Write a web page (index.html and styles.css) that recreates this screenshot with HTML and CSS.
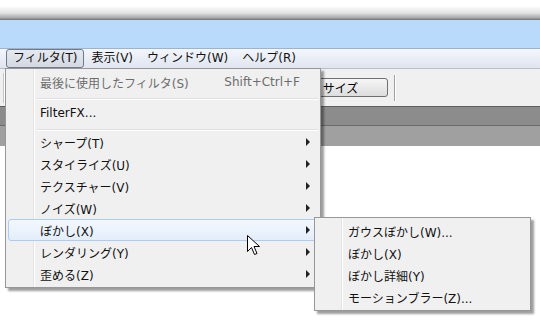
FILE: index.html
```html
<!DOCTYPE html>
<html lang="ja">
<head>
    <title>フィルタメニュー</title>
    <meta charset="utf-8">
    <meta name="viewport" content="width=device-width, initial-scale=1">
    <link rel="stylesheet" href="styles.css">
</head>
<body>
    <div class="window">
        <div class="top-edge"></div>
        <div class="titlebar"></div>

        <div class="menubar">
            <span class="menubar-item open">フィルタ(T)</span>
            <span class="menubar-item">表示(V)</span>
            <span class="menubar-item">ウィンドウ(W)</span>
            <span class="menubar-item">ヘルプ(R)</span>
        </div>

        <div class="toolbar">
            <div class="grip"></div>
            <button class="tool-button">サイズ</button>
            <div class="tool-sep"></div>
        </div>

        <div class="panel-head"></div>
        <div class="panel-sub"></div>
        <div class="canvas"></div>
    </div>

    <!-- フィルタ メニュー -->
    <div class="menu main-menu">
        <div class="menu-item disabled">
            <span class="label">最後に使用したフィルタ(S)</span>
            <span class="shortcut">Shift+Ctrl+F</span>
        </div>
        <div class="menu-sep first"></div>
        <div class="menu-item"><span class="label">FilterFX...</span></div>
        <div class="menu-sep"></div>
        <div class="menu-item sub"><span class="label">シャープ(T)</span><span class="arrow"></span></div>
        <div class="menu-item sub"><span class="label">スタイライズ(U)</span><span class="arrow"></span></div>
        <div class="menu-item sub"><span class="label">テクスチャー(V)</span><span class="arrow"></span></div>
        <div class="menu-item sub"><span class="label">ノイズ(W)</span><span class="arrow"></span></div>
        <div class="menu-item sub hover"><span class="label">ぼかし(X)</span><span class="arrow"></span></div>
        <div class="menu-item sub"><span class="label">レンダリング(Y)</span><span class="arrow"></span></div>
        <div class="menu-item sub"><span class="label">歪める(Z)</span><span class="arrow"></span></div>
    </div>

    <!-- ぼかし サブメニュー -->
    <div class="menu sub-menu">
        <div class="menu-item"><span class="label">ガウスぼかし(W)...</span></div>
        <div class="menu-item"><span class="label">ぼかし(X)</span></div>
        <div class="menu-item"><span class="label">ぼかし詳細(Y)</span></div>
        <div class="menu-item"><span class="label">モーションブラー(Z)...</span></div>
    </div>

    <svg class="cursor" width="13" height="21" viewBox="0 0 13 21">
        <path d="M0.5 0.5 L0.5 16.5 L4.5 12.5 L7.5 19.5 L10 18.5 L7 11.5 L12.5 11.5 Z" fill="#fff" stroke="#000" stroke-width="1" stroke-linejoin="miter"/>
    </svg>
</body>
</html>
```

FILE: styles.css
```css
body {
    margin: 0;
    width: 540px;
    height: 322px;
    overflow: hidden;
    background-color: #ffffff;
    font-family: "DejaVu Sans", "Noto Sans CJK JP", sans-serif;
    font-size: 12px;
    color: #111;
    position: relative;
}
.window {
    display: flex;
    flex-direction: column;
}
.top-edge {
    height: 20px;
    background: linear-gradient(#ffffff 0px, #ffffff 6px, #e2e2e2 13px, #a6a6a6 18px, #6e6e6e 20px);
}
.titlebar {
    height: 28px;
    background-color: #b9dafa;
    border-bottom: 1px solid #9fb3c8;
}
.menubar {
    height: 19px;
    display: flex;
    align-items: center;
    padding-left: 6px;
    background: linear-gradient(#f4f6fb, #dfe5f1);
    border-bottom: 1px solid #b9bfc9;
}
.menubar-item {
    padding: 0 6px;
    line-height: 17px;
    border: 1px solid transparent;
}
.menubar-item.open {
    border-color: #6f7b8a;
    border-radius: 3px;
    background: linear-gradient(#e6e9ef, #d3d8e2);
}
.toolbar {
    height: 37px;
    display: flex;
    align-items: center;
    background-color: #f0f0f0;
}
.grip {
    width: 1px;
    height: 30px;
    margin-left: 3px;
    background-color: #c8c8c8;
    border-right: 1px solid #fff;
}
.tool-button {
    margin-left: 288px;
    width: 95px;
    height: 19px;
    padding: 0;
    border: 1px solid #707070;
    border-radius: 3px;
    background: linear-gradient(#f6f6f6, #dddddd);
    font-family: inherit;
    font-size: 12px;
}
.tool-sep {
    width: 1px;
    height: 26px;
    margin-left: 6px;
    background-color: #a0a0a0;
    border-right: 1px solid #fff;
}
.panel-head {
    height: 18px;
    background-color: #8c8c8c;
    border-top: 1px solid #5f5f5f;
    border-bottom: 1px solid #6a6a6a;
}
.panel-sub {
    height: 20px;
    background-color: #a0a0a0;
}
.canvas {
    flex: 1;
    background-color: #fff;
}

/* メニュー */
.menu {
    position: absolute;
    background-color: #f0f0f0;
    border: 1px solid #979797;
    padding: 2px;
    box-shadow: 3px 3px 2px rgba(0, 0, 0, 0.38);
    background-image: linear-gradient(90deg, transparent 26px, #e2e3e3 26px, #e2e3e3 27px, #ffffff 27px, #ffffff 28px, transparent 28px);
}
.main-menu {
    left: 5px;
    top: 68px;
    width: 310px;
    background-image: linear-gradient(90deg, transparent 27px, #e2e3e3 27px, #e2e3e3 28px, #ffffff 28px, #ffffff 29px, transparent 29px);
}
.sub-menu {
    left: 314px;
    top: 217px;
    width: 211px;
}
.menu-item {
    height: 22px;
    display: flex;
    align-items: center;
    padding-left: 31px;
    border: 1px solid transparent;
    box-sizing: border-box;
    position: relative;
}
.sub-menu .menu-item {
    padding-left: 30px;
}
.menu-item .label {
    flex: 1;
}
.menu-item.disabled {
    color: #6d6d6d;
}
.shortcut {
    margin-right: 17px;
}
.menu-item.hover {
    border-color: #a9cdf6;
    border-radius: 3px;
    background: linear-gradient(#f3f8fe, #e3eefb);
}
.arrow {
    width: 0;
    height: 0;
    margin-right: 7px;
    border-top: 4px solid transparent;
    border-bottom: 4px solid transparent;
    border-left: 4px solid #222;
}
.menu-sep {
    height: 7px;
    margin-left: 29px;
    background: linear-gradient(transparent 5px, #e0e0e0 5px, #e0e0e0 6px, #fff 6px, #fff 7px, transparent 7px);
}
.menu-sep.first {
    height: 9px;
}
.cursor {
    position: absolute;
    left: 247px;
    top: 235px;
}
```
